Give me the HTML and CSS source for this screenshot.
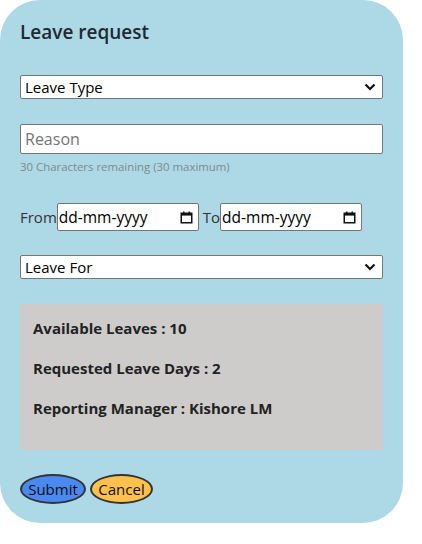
FILE: index.html
```html
<!DOCTYPE html>
<html lang="en">
<head>
<meta charset="utf-8">
<title>Leave request</title>
<link rel="stylesheet" href="styles.css">
</head>
<body>
<form class="card">
  <h2 class="title">Leave request</h2>

  <div class="select-wrap first">
    <select class="select"><option>Leave Type</option></select>
    <svg class="chev" width="12" height="8" viewBox="0 0 12 8"><path d="M1.5 1.5 L6 6 L10.5 1.5" fill="none" stroke="#111" stroke-width="2.2"/></svg>
  </div>

  <input class="reason" type="text" placeholder="Reason">
  <div class="hint">30 Characters remaining (30 maximum)</div>

  <div class="dates">
    <span class="lbl">From</span>
    <div class="date">
      <input class="date-in" type="text" placeholder="dd-mm-yyyy">
      <svg class="cal" width="13" height="13" viewBox="0 0 13 13"><rect x="1.25" y="2.25" width="10.5" height="9.5" fill="none" stroke="#111" stroke-width="1.5"/><rect x="1" y="2" width="11" height="2.6" fill="#111"/><rect x="3" y="0.5" width="1.5" height="2" fill="#111"/><rect x="8.5" y="0.5" width="1.5" height="2" fill="#111"/></svg>
    </div>
    <span class="lbl to">To</span>
    <div class="date">
      <input class="date-in" type="text" placeholder="dd-mm-yyyy">
      <svg class="cal" width="13" height="13" viewBox="0 0 13 13"><rect x="1.25" y="2.25" width="10.5" height="9.5" fill="none" stroke="#111" stroke-width="1.5"/><rect x="1" y="2" width="11" height="2.6" fill="#111"/><rect x="3" y="0.5" width="1.5" height="2" fill="#111"/><rect x="8.5" y="0.5" width="1.5" height="2" fill="#111"/></svg>
    </div>
  </div>

  <div class="select-wrap second">
    <select class="select"><option>Leave For</option></select>
    <svg class="chev" width="12" height="8" viewBox="0 0 12 8"><path d="M1.5 1.5 L6 6 L10.5 1.5" fill="none" stroke="#111" stroke-width="2.2"/></svg>
  </div>

  <div class="info">
    <p class="info-line">Available Leaves : 10</p>
    <p class="info-line">Requested Leave Days : 2</p>
    <p class="info-line">Reporting Manager : Kishore LM</p>
  </div>

  <div class="actions">
    <button type="button" class="btn submit">Submit</button>
    <button type="button" class="btn cancel">Cancel</button>
  </div>
</form>
</body>
</html>
```

FILE: styles.css
```css
* { box-sizing: border-box; }
html, body { margin: 0; padding: 0; background: #fff; }
body { font-family: "Open Sans", "Noto Sans", sans-serif; color: #212529; }

.card {
  width: 403px;
  height: 523px;
  background: #add8e6;
  border-radius: 40px;
  padding: 18px 20px 0 20px;
  display: flex;
  flex-direction: column;
  align-items: stretch;
}

.title {
  margin: 0;
  font-size: 19px;
  line-height: 28px;
  font-weight: 600;
  color: #222831;
}

.select-wrap { position: relative; height: 24px; }
.select-wrap.first { margin-top: 29px; }
.select-wrap.second { margin-top: 24px; }
.select {
  appearance: none;
  -webkit-appearance: none;
  width: 100%;
  height: 24px;
  border: 1px solid #767676;
  border-radius: 2px;
  background: #fff;
  padding: 0 0 0 4px;
  font-family: inherit;
  font-size: 15px;
  color: #000;
}
.chev { position: absolute; right: 7px; top: 8px; pointer-events: none; }

.reason {
  margin-top: 25px;
  height: 30px;
  width: 100%;
  border: 1px solid #767676;
  border-radius: 2px;
  padding: 0 0 0 4px;
  font-family: inherit;
  font-size: 16px;
  background: #fff;
}
.reason::placeholder { color: #757575; }

.hint {
  margin-top: 5px;
  font-size: 11.4px;
  line-height: 16px;
  color: #7f8a8e;
}

.dates {
  margin-top: 28px;
  display: flex;
  align-items: center;
  height: 28px;
}
.lbl { font-size: 15px; color: #333; }
.lbl.to { margin-left: 4px; }
.date { position: relative; width: 142px; height: 28px; }
.date-in {
  width: 100%;
  height: 28px;
  border: 1px solid #767676;
  border-radius: 2px;
  padding: 0 0 0 1px;
  font-family: inherit;
  font-size: 15.5px;
  background: #fff;
}
.date-in::placeholder { color: #000; }
.cal { position: absolute; right: 6px; top: 8px; pointer-events: none; }

.info {
  margin-top: 25px;
  height: 146px;
  background: #cdcccb;
  padding: 14px 13px 0 13px;
}
.info-line {
  margin: 0 0 20px 0;
  font-size: 15px;
  line-height: 20px;
  font-weight: 700;
  color: #222;
}

.actions { margin-top: 24px; display: flex; gap: 4px; }
.btn {
  height: 30px;
  border: 2px solid #333;
  border-radius: 50%;
  padding: 0 6px;
  font-family: inherit;
  font-size: 15px;
  color: #111;
}
.submit { background: #4a88f2; width: 66px; }
.cancel { background: #ffc04d; width: 63px; }
```
